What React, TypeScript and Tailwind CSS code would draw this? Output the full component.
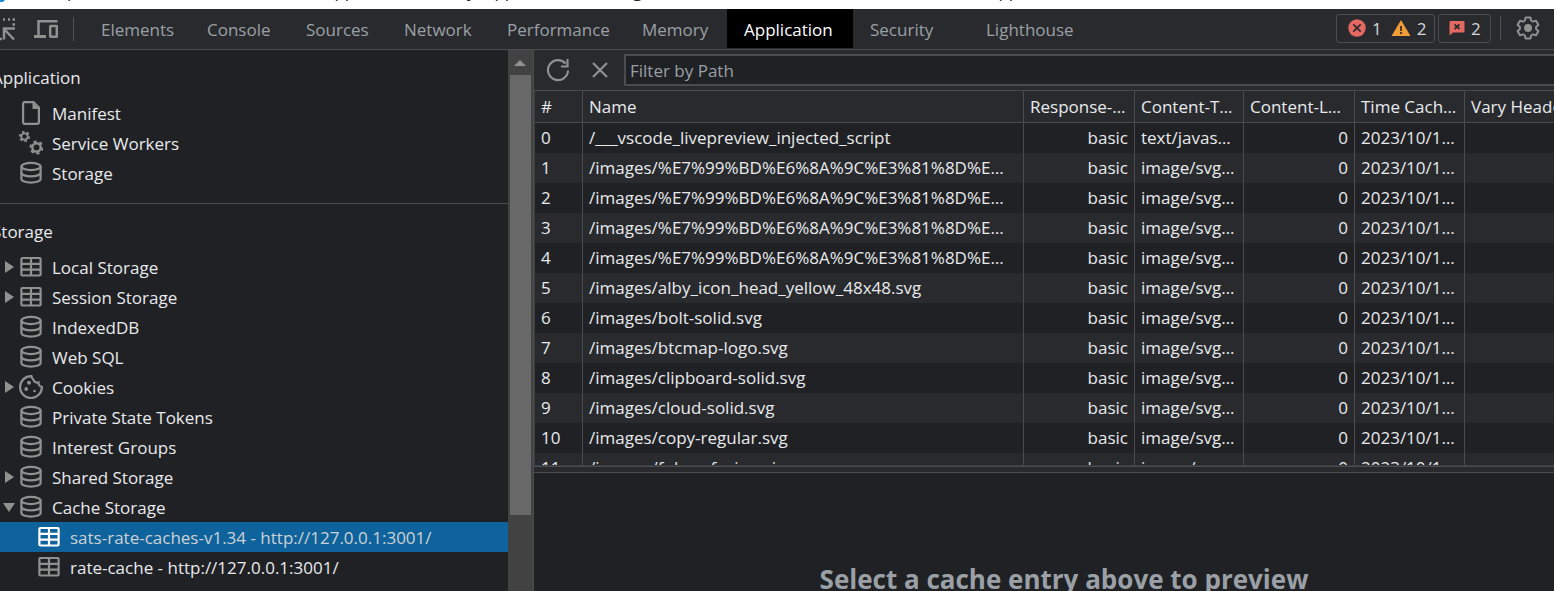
import React, { useState } from 'react';

const tabs = [
  { name: 'Elements', cls: 'w-[106px]' },
  { name: 'Console', cls: 'w-[99px]' },
  { name: 'Sources', cls: 'w-[98px]' },
  { name: 'Network', cls: 'w-[103px]' },
  { name: 'Performance', cls: 'w-[135px]' },
  { name: 'Memory', cls: 'w-[102px]' },
  { name: 'Application', cls: 'w-[126px]' },
  { name: 'Security', cls: 'w-[116px]' },
  { name: 'Lighthouse', cls: 'w-[157px]' },
];

type IconName = 'file' | 'gears' | 'database' | 'table' | 'cookie';

interface TreeItem {
  label: string;
  icon: IconName;
  arrow?: 'right' | 'down';
  nested?: boolean;
}

const applicationItems: TreeItem[] = [
  { label: 'Manifest', icon: 'file' },
  { label: 'Service Workers', icon: 'gears' },
  { label: 'Storage', icon: 'database' },
];

const storageItems: TreeItem[] = [
  { label: 'Local Storage', icon: 'table', arrow: 'right' },
  { label: 'Session Storage', icon: 'table', arrow: 'right' },
  { label: 'IndexedDB', icon: 'database' },
  { label: 'Web SQL', icon: 'database' },
  { label: 'Cookies', icon: 'cookie', arrow: 'right' },
  { label: 'Private State Tokens', icon: 'database' },
  { label: 'Interest Groups', icon: 'database' },
  { label: 'Shared Storage', icon: 'database', arrow: 'right' },
  { label: 'Cache Storage', icon: 'database', arrow: 'down' },
  { label: 'sats-rate-caches-v1.34 - http://127.0.0.1:3001/', icon: 'table', nested: true },
  { label: 'rate-cache - http://127.0.0.1:3001/', icon: 'table', nested: true },
];

const encoded = '/images/%E7%99%BD%E6%8A%9C%E3%81%8D%E3%82%A2.svg';

const entries = [
  '/___vscode_livepreview_injected_script',
  encoded,
  encoded,
  encoded,
  encoded,
  '/images/alby_icon_head_yellow_48x48.svg',
  '/images/bolt-solid.svg',
  '/images/btcmap-logo.svg',
  '/images/clipboard-solid.svg',
  '/images/cloud-solid.svg',
  '/images/copy-regular.svg',
  '/images/fukurofavicon.ico',
];

const TreeIcon: React.FC<{ name: IconName }> = ({ name }) => {
  const common = {
    width: 24,
    height: 24,
    viewBox: '0 0 24 24',
    fill: 'none',
    stroke: 'currentColor',
    strokeWidth: 2.2,
    className: 'shrink-0',
    'aria-hidden': true,
  };
  switch (name) {
    case 'file':
      return (
        <svg {...common}>
          <path d="M5 1.1h9.5l5.400 5.400V21a1.900 1.900 0 0 1-1.900 1.900H5A1.900 1.900 0 0 1 4.100 21V3A1.900 1.900 0 0 1 5 1.100z" />
          <path d="M13.500 1v7H20z" fill="currentColor" stroke="none" />
        </svg>
      );
    case 'gears':
      return (
        <svg {...common}>
          <circle cx="5.500" cy="5.500" r="3.200" strokeWidth="1.800" />
          <circle cx="5.500" cy="5.500" r="4.700" strokeWidth="1.800" pathLength="12" strokeDasharray="1 1" />
          <circle cx="17.500" cy="16.500" r="4.200" strokeWidth="2.400" />
          <circle cx="17.500" cy="16.500" r="6.100" strokeWidth="2" pathLength="12" strokeDasharray="1 1" />
        </svg>
      );
    case 'database':
      return (
        <svg {...common}>
          <ellipse cx="12" cy="5.500" rx="9.600" ry="3.600" />
          <path d="M2.400 5.500v12.500c0 2 4.300 3.600 9.600 3.600s9.600-1.600 9.600-3.600V5.500" />
          <path d="M2.400 11.800c0 2 4.300 3.600 9.600 3.600s9.600-1.600 9.600-3.600" />
        </svg>
      );
    case 'table':
      return (
        <svg {...common}>
          <rect x="2.400" y="3" width="19.200" height="17.500" rx="1" />
          <path d="M2 8.800h20M2 14.700h20M12 3v17.500" />
        </svg>
      );
    case 'cookie':
      return (
        <svg {...common}>
          <path d="M12.500 1.200A10.900 10.900 0 1 0 22.900 12a4 4 0 0 1-3.400-4.500 4.300 4.300 0 0 1-5.300-3.200 4 4 0 0 1-1.700-3.100z" />
          <g fill="currentColor" stroke="none">
            <circle cx="10" cy="7.700" r="2" />
            <circle cx="7.200" cy="14" r="1.900" />
            <circle cx="15.500" cy="16" r="1.300" />
          </g>
        </svg>
      );
  }
};

interface TreeRowProps {
  item: TreeItem;
  selected: boolean;
  onSelect: () => void;
}

const TreeRow: React.FC<TreeRowProps> = ({ item, selected, onSelect }) => (
  <li>
    <button
      type="button"
      onClick={onSelect}
      className={`flex h-[30px] w-full items-center text-left whitespace-nowrap ${item.nested ? 'pl-[21px]' : 'pl-[3px]'} ${
        selected ? 'bg-[#0e639c] text-[#cdd1d5]' : ''
      }`}
    >
      <span className="flex w-4 shrink-0 text-[#919191]">
        {item.arrow && (
          <svg width="12" height="12" viewBox="0 0 12 12" fill="currentColor" aria-hidden="true">
            <path d={item.arrow === 'right' ? 'M2 0l9 6-9 6z' : 'M0 2h12l-6 9z'} />
          </svg>
        )}
      </span>
      <span className={selected ? 'text-white' : 'text-[#919191]'}>
        <TreeIcon name={item.icon} />
      </span>
      <span className="pt-0.5 pl-[9px]">{item.label}</span>
    </button>
  </li>
);

// Last line of the page behind the docked tools; only its descenders stay visible
const PageStrip: React.FC = () => (
  <div className="h-[9px] shrink-0 overflow-hidden bg-white text-[#202124]" aria-hidden="true">
    <div className="-mt-[21px] flex h-6 whitespace-nowrap">
      <span className="flex w-[67px] shrink-0 items-end">
        <svg width="5" height="3" viewBox="0 0 5 3">
          <path d="M0 0h5L3 2H0z" fill="#1b87d6" />
        </svg>
      </span>
      <span className="w-[258px] shrink-0">p</span>
      <span className="w-[142px] shrink-0">app</span>
      <span className="w-[18px] shrink-0">y</span>
      <span className="w-[148px] shrink-0">app</span>
      <span className="w-[356px] shrink-0">g</span>
      <span>app</span>
    </div>
  </div>
);

const Toolbar: React.FC<{ active: string; onChange: (name: string) => void }> = ({ active, onChange }) => (
  <header className="flex h-[41px] shrink-0 items-start border-b border-[#4a4c50] bg-[#292a2d] text-[#9aa0a6]">
    <div className="flex h-10 w-[84px] shrink-0 items-center text-[#919191]">
      <button type="button" aria-label="Inspect element" className="-ml-2">
        <svg width="24" height="24" viewBox="0 0 24 24" fill="none" stroke="currentColor" strokeWidth="2.500">
          <path d="M1 2.500h2M6 2.500h2M11 2.500h2M16 2.500h2M20.500 2.500h2.500M20.500 7.500h2.500M8 22h2" />
          <path d="M22 22.500L12 12M12 22.500V11.500h11" />
        </svg>
      </button>
      <button type="button" aria-label="Toggle device toolbar" className="ml-[18px]">
        <svg width="24" height="24" viewBox="0 0 24 24" fill="none" stroke="currentColor" strokeWidth="2.500">
          <path d="M23.500 4.200H4.500V19" />
          <path d="M0 19.500h12" strokeWidth="3" />
          <rect x="16.200" y="9" width="6.600" height="10.700" rx="0.500" />
        </svg>
      </button>
      <span className="ml-[15px] h-6 w-px bg-[#4f5155]" />
    </div>
    <nav className="flex h-[39px]" role="tablist">
      {tabs.map((tab) => (
        <button
          key={tab.name}
          type="button"
          role="tab"
          aria-selected={tab.name === active}
          onClick={() => onChange(tab.name)}
          className={`h-[39px] shrink-0 pt-0.5 pl-[17px] text-left ${tab.cls} ${tab.name === active ? 'bg-black text-white' : ''}`}
        >
          {tab.name}
        </button>
      ))}
    </nav>
    <div className="ml-auto flex h-[38px] shrink-0 items-center pr-[14px] text-[#d6d8db]">
      <button type="button" aria-label="1 error, 2 warnings" className="flex h-[29px] w-[99px] items-center rounded-[3px] border border-[#4a4c50] pl-[11px]">
        <svg width="18" height="18" viewBox="0 0 18 18" aria-hidden="true">
          <circle cx="9" cy="9" r="8.700" fill="#e46962" />
          <path d="M5.300 5.300l7.400 7.400m0-7.400l-7.400 7.400" stroke="#292a2d" strokeWidth="1.700" />
        </svg>
        <span className="pt-0.5 pl-1.5">1</span>
        <svg width="20" height="18" viewBox="0 0 20 18" className="ml-[9px]" aria-hidden="true">
          <path d="M10 1l9.500 16H.5z" fill="#f29c38" />
          <path d="M10 7v5m0 1v2" stroke="#292a2d" strokeWidth="1.700" />
        </svg>
        <span className="pt-0.5 pl-1.5">2</span>
      </button>
      <button type="button" aria-label="2 issues" className="ml-[3px] flex h-[29px] w-[53px] items-center rounded-[3px] border border-[#4a4c50] pl-[10px]">
        <svg width="16" height="16" viewBox="0 0 16 16" aria-hidden="true">
          <path d="M1.500 1h13a1 1 0 0 1 1 1v9.500a1 1 0 0 1-1 1H4L.5 15.500V2a1 1 0 0 1 1-1z" fill="#e46962" />
          <path d="M5.500 4.500l5 4.500m0-4.500l-5 4.500" stroke="#292a2d" strokeWidth="1.700" />
        </svg>
        <span className="pt-0.5 pl-1.5">2</span>
      </button>
      <span className="ml-[9px] h-6 w-px bg-[#4f5155]" />
      <button type="button" aria-label="Settings" className="ml-[15px] text-[#919191]">
        <svg width="24" height="24" viewBox="0 0 24 24" fill="none" stroke="currentColor" strokeWidth="2">
          <path
            d="M9.600 1.500h4.800l.7 3 1.900 1.100 3-.9 2.400 4.100-2.300 2.100v2.200l2.300 2.100-2.400 4.100-3-.9-1.900 1.100-.7 3H9.600l-.7-3L7 18.400l-3 .9-2.400-4.100 2.300-2.100v-2.200L1.600 8.800 4 4.700l3 .9 1.900-1.100z"
            strokeLinejoin="round"
          />
          <circle cx="12" cy="12" r="4" fill="currentColor" stroke="none" />
        </svg>
      </button>
    </div>
  </header>
);

const Sidebar: React.FC = () => {
  const [selected, setSelected] = useState(storageItems[9].label);
  return (
    <aside className="flex w-[533px] shrink-0">
      <div className="min-w-0 flex-1 overflow-hidden">
        <section className="h-[154px] border-b border-[#4a4c50] pt-3">
          <h2 className="-ml-2 flex h-[30px] items-center pt-0.5">Application</h2>
          <ul className="pt-[6px]">
            {applicationItems.map((item) => (
              <TreeRow key={item.label} item={item} selected={false} onSelect={() => setSelected(item.label)} />
            ))}
          </ul>
        </section>
        <section className="pt-3">
          <h2 className="-ml-2 flex h-[30px] items-center pt-0.5">Storage</h2>
          <ul className="pt-[6px]">
            {storageItems.map((item) => (
              <TreeRow
                key={item.label}
                item={item}
                selected={item.label === selected}
                onSelect={() => setSelected(item.label)}
              />
            ))}
          </ul>
        </section>
      </div>
      <div className="flex w-[25px] shrink-0 flex-col items-center bg-[#424242] pr-px" aria-hidden="true">
        <svg width="12" height="25" viewBox="0 0 12 25" fill="#919191">
          <path d="M0 16l6-6 6 6z" />
        </svg>
        <div className="h-[440px] w-[21px] bg-[#686868]" />
      </div>
    </aside>
  );
};

const cell = 'truncate border-r border-[#4a4c50] pl-1.5';

const CacheTable: React.FC = () => (
  <div className="h-[375px] shrink-0 overflow-hidden border-b border-l border-[#3c3d41]">
    <table className="w-full table-fixed border-separate border-spacing-0">
      <colgroup>
        <col className="w-[48px]" />
        <col />
        <col className="w-[111px]" />
        <col className="w-[109px]" />
        <col className="w-[111px]" />
        <col className="w-[110px]" />
        <col className="w-[89px]" />
      </colgroup>
      <thead className="bg-[#292a2d]">
        <tr className="h-8 text-left">
          {['#', 'Name', 'Response-Type', 'Content-Type', 'Content-Length', 'Time Cached'].map((title) => (
            <th key={title} className={`border-b pr-1.5 font-normal ${cell}`}>
              {title}
            </th>
          ))}
          <th className="overflow-hidden border-b border-[#4a4c50] pl-1.5 font-normal whitespace-nowrap">Vary Header</th>
        </tr>
      </thead>
      <tbody>
        {entries.map((name, index) => (
          <tr key={index} className="h-[30px] even:bg-[#292a2d]">
            <td className={`pr-1.5 ${cell}`}>{index}</td>
            <td className={`pr-3 ${cell}`}>{name}</td>
            <td className={`pr-1.5 text-right ${cell}`}>basic</td>
            <td className={`pr-1.5 ${cell}`}>{index === 0 ? 'text/javascript' : 'image/svg+xml'}</td>
            <td className={`pr-1.5 text-right ${cell}`}>0</td>
            <td className={`pr-1.5 ${cell}`}>2023/10/14 12:00:00</td>
            <td />
          </tr>
        ))}
      </tbody>
    </table>
  </div>
);

export default function App() {
  const [tab, setTab] = useState('Application');
  const [filter, setFilter] = useState('');

  return (
    <div className="flex h-screen flex-col overflow-hidden bg-[#202124] font-['Open_Sans',sans-serif] text-[17px] leading-6 text-[#e8eaed]">
      <PageStrip />
      <Toolbar active={tab} onChange={setTab} />
      <div className="flex min-h-0 flex-1">
        <Sidebar />
        <main className="flex min-w-0 flex-1 flex-col border-l border-[#4a4c50]">
          <div className="flex h-[41px] shrink-0 items-center border-b border-[#4a4c50] bg-[#292a2d] text-[#919191]">
            <button type="button" aria-label="Refresh" className="ml-3">
              <svg width="24" height="24" viewBox="0 0 24 24" fill="none" stroke="currentColor" strokeWidth="2.200">
                <path d="M22 12.500A10 10 0 1 1 19.500 5.500M21.500 1v7.500H15" />
              </svg>
            </button>
            <button type="button" aria-label="Delete selected" className="mr-3 ml-[18px]">
              <svg width="24" height="24" viewBox="0 0 24 24" fill="none" stroke="currentColor" strokeWidth="2.200">
                <path d="M5 5l14 14M19 5L5 19" />
              </svg>
            </button>
            <input
              type="text"
              aria-label="Filter by Path"
              placeholder="Filter by Path"
              value={filter}
              onChange={(e) => setFilter(e.target.value)}
              className="-mr-1 h-8 min-w-0 flex-1 border-2 border-[#4a4c50] bg-[#202124] pl-1 text-[#e8eaed] outline-none placeholder:text-[#9aa0a6]"
            />
          </div>
          <CacheTable />
          <div className="h-[7px] shrink-0 border-y border-[#4a4c50] bg-[#292a2d]" />
          <section className="flex flex-1 flex-col items-center overflow-hidden pt-[90px] pl-10">
            <p className="text-[26px] leading-8 font-bold whitespace-nowrap text-[#9aa0a6]">
              Select a cache entry above to preview
            </p>
          </section>
        </main>
      </div>
    </div>
  );
}
